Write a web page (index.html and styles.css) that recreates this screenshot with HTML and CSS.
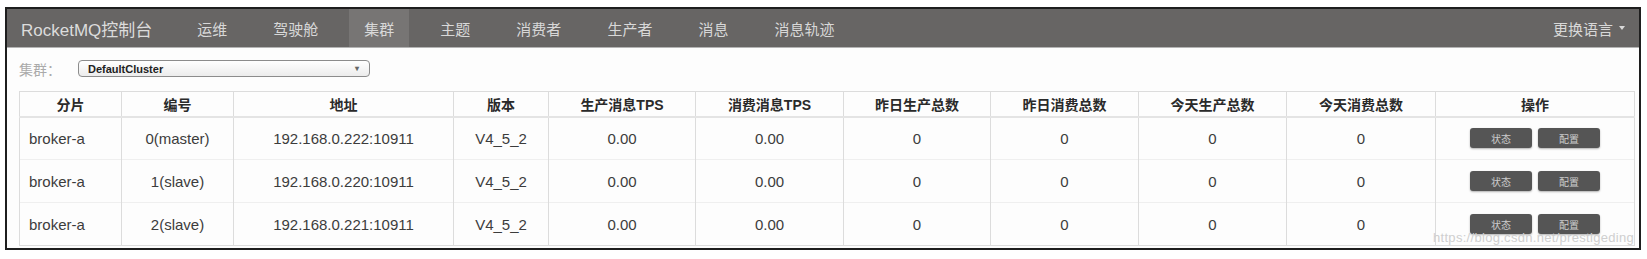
FILE: index.html
```
<!DOCTYPE html>
<html lang="zh-CN">
<head>
    <meta charset="UTF-8">
    <title>RocketMQ控制台 | 集群</title>
    <link rel="stylesheet" href="styles.css">
</head>
<body>
    <div class="frame">
        <!-- Top navigation -->
        <nav class="navbar">
            <span class="brand">RocketMQ控制台</span>
            <ul class="nav">
                <li>运维</li>
                <li>驾驶舱</li>
                <li class="active">集群</li>
                <li>主题</li>
                <li>消费者</li>
                <li>生产者</li>
                <li>消息</li>
                <li>消息轨迹</li>
            </ul>
            <div class="lang">更换语言 <span class="caret"></span></div>
        </nav>

        <!-- Cluster picker -->
        <div class="filter">
            <label class="filter-label">集群：</label>
            <div class="select">
                <span>DefaultCluster</span>
                <span class="select-arrow">&#9662;</span>
            </div>
        </div>

        <table class="broker-table">
            <colgroup>
                <col style="width:102px">
                <col style="width:112px">
                <col style="width:220px">
                <col style="width:95px">
                <col style="width:147px">
                <col style="width:148px">
                <col style="width:147px">
                <col style="width:148px">
                <col style="width:148px">
                <col style="width:149px">
                <col style="width:199px">
            </colgroup>
            <thead>
                <tr>
                    <th>分片</th>
                    <th>编号</th>
                    <th>地址</th>
                    <th>版本</th>
                    <th>生产消息TPS</th>
                    <th>消费消息TPS</th>
                    <th>昨日生产总数</th>
                    <th>昨日消费总数</th>
                    <th>今天生产总数</th>
                    <th>今天消费总数</th>
                    <th>操作</th>
                </tr>
            </thead>
            <tbody>
                <tr>
                    <td class="name">broker-a</td>
                    <td>0(master)</td>
                    <td>192.168.0.222:10911</td>
                    <td>V4_5_2</td>
                    <td>0.00</td>
                    <td>0.00</td>
                    <td>0</td>
                    <td>0</td>
                    <td>0</td>
                    <td>0</td>
                    <td><button class="btn">状态</button><button class="btn">配置</button></td>
                </tr>
                <tr>
                    <td class="name">broker-a</td>
                    <td>1(slave)</td>
                    <td>192.168.0.220:10911</td>
                    <td>V4_5_2</td>
                    <td>0.00</td>
                    <td>0.00</td>
                    <td>0</td>
                    <td>0</td>
                    <td>0</td>
                    <td>0</td>
                    <td><button class="btn">状态</button><button class="btn">配置</button></td>
                </tr>
                <tr>
                    <td class="name">broker-a</td>
                    <td>2(slave)</td>
                    <td>192.168.0.221:10911</td>
                    <td>V4_5_2</td>
                    <td>0.00</td>
                    <td>0.00</td>
                    <td>0</td>
                    <td>0</td>
                    <td>0</td>
                    <td>0</td>
                    <td><button class="btn">状态</button><button class="btn">配置</button></td>
                </tr>
            </tbody>
        </table>

        <div class="watermark">https://blog.csdn.net/prestigeding</div>
    </div>
</body>
</html>
```

FILE: styles.css
```
* {
    margin: 0;
    padding: 0;
    box-sizing: border-box;
}

body {
    font-family: 'Liberation Sans', Arial, 'Noto Sans CJK SC', sans-serif;
    background: #fff;
    color: #444;
}

.frame {
    position: relative;
    margin: 7px 6px 0 5px;
    height: 243px;
    border: 2px solid #1e1e1e;
    background: #fdfdfd;
    overflow: hidden;
}

/* Navbar */
.navbar {
    display: flex;
    align-items: center;
    height: 39px;
    padding-left: 14px;
    background: #676564;
    border-bottom: 1px solid #b4b4b4;
    color: #d8d8d8;
}

.brand {
    font-size: 17px;
    margin-right: 30px;
    color: #dcdcdc;
}

.nav {
    display: flex;
    gap: 16px;
    list-style: none;
    height: 100%;
}

.nav li {
    display: flex;
    align-items: center;
    padding: 0 15px;
    font-size: 15px;
}

.nav li.active {
    background: #777574;
}

.lang {
    margin-left: auto;
    margin-right: 14px;
    font-size: 15px;
    display: flex;
    align-items: center;
}

.caret {
    display: inline-block;
    margin-left: 6px;
    border-top: 4px solid #d8d8d8;
    border-left: 3px solid transparent;
    border-right: 3px solid transparent;
}

/* Cluster filter */
.filter {
    display: flex;
    align-items: center;
    height: 17px;
    margin: 12px 0 0 12px;
}

.filter-label {
    font-size: 14px;
    color: #aaa;
    width: 59px;
}

.select {
    display: flex;
    align-items: center;
    justify-content: space-between;
    width: 292px;
    height: 17px;
    padding: 0 10px 0 9px;
    border: 1px solid #8c8c8c;
    border-radius: 4px;
    background: linear-gradient(#ffffff, #ececec);
    font-size: 11px;
    font-weight: bold;
    color: #222;
}

.select-arrow {
    font-size: 8px;
    color: #666;
}

/* Broker table */
.broker-table {
    margin: 14px 0 0 12px;
    border-collapse: collapse;
    table-layout: fixed;
    width: 1615px;
    border: 1px solid #dcdcdc;
}

.broker-table th {
    height: 25px;
    font-size: 14px;
    font-weight: bold;
    color: #2a2a2a;
    text-align: center;
    border: 1px solid #dcdcdc;
    border-bottom: 2px solid #e4e4e4;
}

.broker-table td {
    height: 43px;
    font-size: 15px;
    text-align: center;
    color: #3c3c3c;
    border-left: 1px solid #dcdcdc;
    border-right: 1px solid #dcdcdc;
    border-top: 1px solid #efefef;
}

.broker-table td.name {
    text-align: left;
    padding-left: 9px;
}

.btn {
    width: 62px;
    height: 20px;
    margin: 0 3px;
    border: none;
    border-radius: 3px;
    background: #555;
    color: #ccc;
    font-family: inherit;
    font-size: 10px;
    box-shadow: 0 1px 2px rgba(0, 0, 0, 0.3);
}

.watermark {
    position: absolute;
    right: 5px;
    bottom: 3px;
    font-size: 13px;
    color: #cfcfcf;
    letter-spacing: 0.3px;
}
```
